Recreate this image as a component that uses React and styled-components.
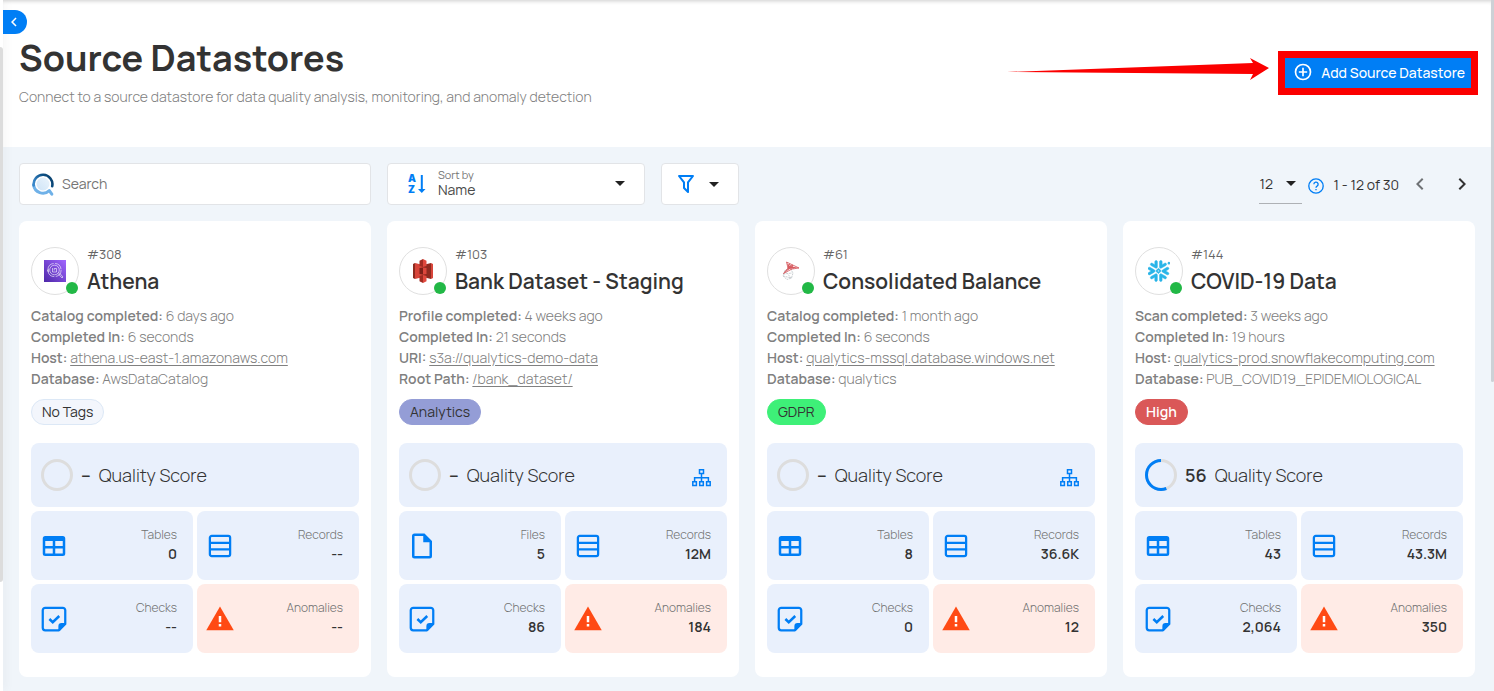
import React, { useState } from "react";
import styled, { createGlobalStyle } from "styled-components";
import { SiSnowflake } from "react-icons/si";

const BLUE = "#007ef5";

const GlobalStyle = createGlobalStyle`
    * {
        box-sizing: border-box;
    }

    body {
        margin: 0;
        background: #fff;
        color: #333;
        font-family: Manrope, Inter, "Noto Sans", sans-serif;
        font-size: 14px;
        overflow: hidden;
    }

    button, input, select {
        font: inherit;
        color: inherit;
    }

    svg {
        display: block;
        flex: none;
    }
`;

const Shell = styled.div`
    display: grid;
    grid-template-columns: 3px 1fr 3px;
    height: 100vh;
`;

const SideEdge = styled.div`
    z-index: 1;
    padding-top: 47px;
    background: #fff;
    box-shadow: 2px 0 8px rgba(0, 0, 0, 0.08);
`;

const Thumb = styled.div`
    height: ${(p) => p.$size};
    background: ${(p) => p.$color};
    border-radius: ${(p) => p.$radius};
`;

const ScrollTrack = styled.div`
    background: #f0f5fa;
`;

const Main = styled.main`
    position: relative;
    min-width: 0;
    overflow: hidden;
    background: #f0f5fa;
`;

const CollapseButton = styled.button`
    position: absolute;
    top: 10px;
    left: 0;
    z-index: 2;
    display: flex;
    align-items: center;
    width: 24px;
    height: 24px;
    padding: 0 2px;
    border: 0;
    border-radius: 0 12px 12px 0;
    background: ${BLUE};
    color: #fff;
    cursor: pointer;
`;

const Header = styled.header`
    display: flex;
    justify-content: space-between;
    min-height: 147px;
    padding: 34px 20px 0 16px;
    background: #fff;
    box-shadow: inset 0 4px 4px -3px rgba(0, 0, 0, 0.2);

    h1 {
        margin: 0;
        font-size: 36px;
        line-height: 48px;
        font-weight: 700;
    }

    p {
        margin: 5px 0 0;
        line-height: 20px;
        font-weight: 300;
        color: #808080;
    }
`;

const HeaderActions = styled.div`
    display: flex;
    align-items: flex-start;
    gap: 16px;
    padding-top: 24px;
`;

const AddButton = styled.button`
    display: flex;
    align-items: center;
    justify-content: space-between;
    width: 186px;
    height: 30px;
    padding: 0 6px 2px 8px;
    border: 0;
    outline: 7px solid #fb0000;
    background: ${BLUE};
    color: #fff;
    font-weight: 500;
    white-space: nowrap;
    cursor: pointer;
`;

const Content = styled.section`
    padding: 16px;
`;

const Columns = styled.div`
    display: grid;
    grid-template-columns: repeat(4, minmax(0, 1fr));
    gap: 16px;
    margin-bottom: 16px;
`;

const Box = styled.div`
    display: flex;
    align-items: center;
    height: 42px;
    border: 1px solid #e2e4e7;
    border-radius: 4px;
    background: #fff;
`;

const SearchBox = styled(Box)`
    gap: 8px;
    padding: 0 12px;

    input {
        flex: 1;
        min-width: 0;
        padding: 0 0 2px;
        border: 0;
        outline: 0;
        background: none;
    }

    input::placeholder {
        color: #757575;
        opacity: 1;
    }
`;

const Filters = styled.div`
    display: flex;
    gap: 16px;
`;

const SortBox = styled(Box)`
    flex: 1;
    gap: 11px;
    padding: 0 19px 0 20px;
`;

const SelectWrap = styled.div`
    display: grid;
    align-items: center;

    select {
        grid-area: 1 / 1;
        appearance: none;
        width: 100%;
        height: 16px;
        padding: 0;
        border: 0;
        outline: 0;
        background: none;
        line-height: 16px;
    }

    svg {
        grid-area: 1 / 1;
        justify-self: end;
        pointer-events: none;
    }
`;

const SortField = styled(SelectWrap)`
    flex: 1;
    grid-template-rows: 14px 16px;
    padding-bottom: 2px;

    label {
        grid-area: 1 / 1;
        font-size: 11px;
        line-height: 14px;
        color: #757575;
    }

    select {
        grid-area: 2 / 1;
        color: #4a4a4a;
    }

    svg {
        grid-area: 1 / 1 / 3 / 2;
    }
`;

const FilterButton = styled.button`
    display: flex;
    align-items: center;
    gap: 11px;
    width: 78px;
    height: 42px;
    padding: 0 12px;
    border: 1px solid #e2e4e7;
    border-radius: 4px;
    background: #fff;
    cursor: pointer;
`;

const Pager = styled.div`
    grid-column: span 2;
    display: flex;
    align-items: center;
    justify-content: flex-end;
    padding-right: 1px;
    white-space: nowrap;
`;

const PageSize = styled(SelectWrap)`
    width: 43px;
    height: 39px;
    padding-right: 6px;
    border-bottom: 1px solid #aeb1b5;
`;

const HelpIcon = styled.svg`
    margin: 4px 9px 0 6px;
`;

const PageButton = styled.button`
    width: 24px;
    height: 24px;
    margin-left: ${(p) => p.$gap};
    padding: 0;
    border: 0;
    background: none;
    cursor: pointer;

    &:disabled {
        color: #6f7275;
        cursor: default;
    }
`;

const Card = styled.article`
    padding: 26px 12px 24px;
    border-radius: 8px;
    background: #fff;
`;

const CardHead = styled.div`
    display: flex;
    gap: 8px;
    margin-bottom: 10px;

    small {
        display: block;
        font-size: 13px;
        line-height: 15px;
        color: #666;
    }

    h2 {
        margin: 6px 0 0;
        font-size: 21px;
        line-height: 27px;
        font-weight: 600;
        white-space: nowrap;
    }
`;

const Avatar = styled.div`
    position: relative;
    display: flex;
    align-items: center;
    justify-content: center;
    width: 48px;
    height: 48px;
    border: 1px solid #e0e0e0;
    border-radius: 50%;
`;

const StatusDot = styled.span`
    position: absolute;
    right: 0;
    bottom: 0;
    width: 12px;
    height: 12px;
    border-radius: 50%;
    background: #22b846;
`;

const Detail = styled.p`
    margin: 0;
    line-height: 21px;
    font-weight: 300;
    color: #808080;
    white-space: nowrap;

    strong {
        font-weight: 600;
    }

    a {
        color: inherit;
        text-underline-offset: 2px;
    }
`;

const Tag = styled.span`
    display: inline-block;
    height: 26px;
    margin: 10px 0 18px;
    padding: 0 10px;
    border: 1px solid ${(p) => p.$border || p.$bg};
    border-radius: 13px;
    background: ${(p) => p.$bg};
    color: ${(p) => p.$color || "#333"};
    line-height: 24px;
    font-weight: ${(p) => p.$weight || 400};
    vertical-align: top;
`;

const Stats = styled.div`
    display: grid;
    grid-template-columns: 1fr 1fr;
    gap: 4px;
`;

const Quality = styled.div`
    grid-column: span 2;
    display: flex;
    align-items: center;
    gap: 8px;
    height: 64px;
    padding: 0 16px 0 10px;
    border-radius: 8px;
    background: #e9f0fc;
    font-size: 18px;
    font-weight: 300;

    strong {
        font-weight: 600;
    }
`;

const LineageButton = styled.button`
    margin: 5px 0 0 auto;
    padding: 0;
    border: 0;
    background: none;
    cursor: pointer;
`;

const Tile = styled.div`
    display: flex;
    align-items: center;
    justify-content: space-between;
    height: 69px;
    padding: 0 16px 0 8px;
    border-radius: 8px;
    background: ${(p) => (p.$alert ? "#ffebe6" : "#e9f0fc")};
    line-height: 19px;
    text-align: right;
`;

const TileText = styled.div`
    padding-bottom: 3px;
    font-variant-ligatures: none;

    span {
        display: block;
        font-size: 12px;
        font-weight: 300;
        color: #707070;
    }

    strong {
        display: block;
        font-weight: 600;
    }
`;

const TileIcon = ({ name }) => {
    const color = name === "Anomalies" ? "#ff4a14" : BLUE;
    return (
        <svg width="30" height="30" viewBox="0 0 24 24" fill={color} aria-hidden="true">
            {name === "Tables" && (
                <path d="M5,4H19A2,2 0 0,1 21,6V18A2,2 0 0,1 19,20H5A2,2 0 0,1 3,18V6A2,2 0 0,1 5,4M5,8V12H11V8H5M13,8V12H19V8H13M5,14V18H11V14H5M13,14V18H19V14H13Z" />
            )}
            {name === "Files" && (
                <path d="M14,2H6A2,2 0 0,0 4,4V20A2,2 0 0,0 6,22H18A2,2 0 0,0 20,20V8L14,2M18,20H6V4H13V9H18V20Z" />
            )}
            {name === "Records" && (
                <g fill="none" stroke={color} strokeWidth="1.8">
                    <rect x="3.9" y="3.9" width="16.2" height="16.2" rx="1.5" />
                    <path d="M4 9.4H20M4 14.7H20" />
                </g>
            )}
            {name === "Checks" && (
                <>
                    <path d="M21 16V5a2 2 0 0 0-2-2H5a2 2 0 0 0-2 2v14a2 2 0 0 0 2 2h11z" fill="none" stroke={color} strokeWidth="1.8" strokeLinejoin="round" />
                    <path d="M21.500 15.200H18a2.500 2.500 0 0 0-2.500 2.500V21.500h1z" />
                    <path d="M8.300 12L11 14.600L16.200 9.600" fill="none" stroke={color} strokeWidth="2" />
                </>
            )}
            {name === "Anomalies" && (
                <>
                    <path d="M1,21H23L12,2Z" />
                    <path d="M13,14.500H11V9.500H13M13,18H11V16H13" fill="#fff" />
                </>
            )}
        </svg>
    );
};

const Caret = () => (
    <svg width="10" height="5" viewBox="0 0 10 5" aria-hidden="true">
        <path d="M0 0H10L5 5Z" fill="#222" />
    </svg>
);

const Chevron = ({ left, size = 24 }) => (
    <svg width={size} height={size} viewBox="0 0 24 24" fill="currentColor" aria-hidden="true">
        <path
            d={
                left
                    ? "M15.410,16.580L10.830,12L15.410,7.410L14,6L8,12L14,18L15.410,16.580Z"
                    : "M8.590,16.580L13.170,12L8.590,7.410L10,6L16,12L10,18L8.590,16.580Z"
            }
        />
    </svg>
);

const BrandMark = () => (
    <svg width="22" height="23" viewBox="0 0 22 23" fill="none" aria-hidden="true">
        <defs>
            <linearGradient id="mark-top" x1="0" y1="0.600" x2="1" y2="0.200">
                <stop offset="0" stopColor="#3987c9" />
                <stop offset="0.600" stopColor="#0c5085" />
                <stop offset="1" stopColor="#0a3f6b" />
            </linearGradient>
            <linearGradient id="mark-fill" x1="1" y1="0" x2="0" y2="1">
                <stop offset="0" stopColor="#eaf4fc" />
                <stop offset="1" stopColor="#cfe4f7" />
            </linearGradient>
        </defs>
        <circle cx="11" cy="11" r="6.500" fill="url(#mark-fill)" />
        <path d="M1.600 12A9.400 9.400 0 0 0 17.300 17.600L19.800 21.200" stroke="#6fb1e8" strokeWidth="3" strokeLinecap="round" strokeLinejoin="round" />
        <path d="M1.700 12.500A9.400 9.400 0 1 1 20.200 13.200" stroke="url(#mark-top)" strokeWidth="2.600" strokeLinecap="round" />
    </svg>
);

const SortIcon = () => (
    <svg width="19" height="26" viewBox="0 0 19 26" fill={BLUE} aria-hidden="true">
        <g fontFamily="Inter, sans-serif" fontSize="10" fontWeight="900">
            <text x="0" y="11">A</text>
            <text x="0" y="22">Z</text>
        </g>
        <path d="M12.800 4H14.800V18H17.500L13.800 22L10 18H12.800Z" />
    </svg>
);

const Ring = ({ value }) => (
    <svg width="32" height="32" viewBox="0 0 32 32" fill="none" strokeWidth="3" aria-hidden="true">
        <circle cx="16" cy="16" r="14.500" stroke="#ddd" />
        {value > 0 && (
            <circle
                cx="16"
                cy="16"
                r="14.500"
                stroke={BLUE}
                pathLength="100"
                strokeDasharray={`${value} 100`}
                transform="matrix(0 -1 -1 0 32 32)"
            />
        )}
    </svg>
);

const LineageIcon = () => (
    <svg width="19" height="18" viewBox="0 0 19 18" fill="none" stroke={BLUE} strokeWidth="1.500" aria-hidden="true">
        <path d="M7.500 0.800h4v3.700h-4zM0.800 12.800h3.600v3.700H0.800zM7.700 12.800h3.600v3.700H7.700zM14.600 12.800h3.600v3.700h-3.600zM9.500 4.500v8M2.600 12.500V8.700h13.800v3.800" />
    </svg>
);

const AthenaLogo = () => (
    <svg width="22" height="22" viewBox="0 0 22 22" aria-hidden="true">
        <defs>
            <linearGradient id="athena" x1="0" y1="1" x2="1" y2="0">
                <stop offset="0" stopColor="#4d27a8" />
                <stop offset="1" stopColor="#a166ff" />
            </linearGradient>
        </defs>
        <rect width="22" height="22" fill="url(#athena)" />
        <g fill="none" stroke="#fff" strokeOpacity="0.850" strokeWidth="0.700">
            <circle cx="10.500" cy="10" r="4.800" />
            <circle cx="10.500" cy="10" r="6.600" strokeDasharray="9 1.500" />
            <path d="M8.500 8v4h4V8.500h-2.300v2M3 10.500l1.500-1v2zM14 13.500l4 4.500 1-1-4-4.500" />
        </g>
    </svg>
);

const S3Logo = () => (
    <svg width="20" height="24" viewBox="0 0 20 24" aria-hidden="true">
        <path d="M0 5L2 4V20L0 19Z" fill="#8c2b20" />
        <path d="M2 4L10 6V18L2 20Z" fill="#d8453a" />
        <path d="M10 6L18 4V20L10 18Z" fill="#8f2b20" />
        <path d="M18 4L20 5V19L18 20Z" fill="#d8453a" />
        <path d="M6.500 1.800L10 0V8L6.500 7ZM6.500 17L10 16V24L6.500 22.200Z" fill="#a02c22" />
        <path d="M10 0L13.500 1.800V7L10 8ZM10 16L13.500 17V22.200L10 24Z" fill="#e0483d" />
        <path d="M6.500 9L10 8.500V15.500L6.500 15Z" fill="#7d2018" />
        <path d="M10 8.500L13.500 9V15L10 15.500Z" fill="#dd473c" />
    </svg>
);

const SqlServerLogo = () => (
    <svg width="18" height="20" viewBox="0 0 18 20" fill="none" aria-hidden="true">
        <path d="M8 7L3 9.500L1 15L5 18.500L9.500 17L11 12ZM1.500 13L10 12M3 9.500L9 17M1 15L9.500 17" stroke="#cbd0d3" strokeWidth="1" strokeDasharray="2 0.700" />
        <path d="M4.500 1L17 7L10 8L1.500 12.500L6 7ZM6 7L10.500 4L10 8L6 7L7 3L12 7.500" stroke="#cd3940" strokeWidth="0.700" />
        <path d="M5 2L8 5L17 7L9 7L2 12L6.500 7Z" fill="#d85b60" />
    </svg>
);

const logos = {
    athena: <AthenaLogo />,
    s3: <S3Logo />,
    mssql: <SqlServerLogo />,
    snowflake: <SiSnowflake size={22} color="#29b5e8" stroke="#29b5e8" strokeWidth={0.5} aria-hidden="true" />,
};

const datastores = [
    {
        id: 308,
        name: "Athena",
        logo: "athena",
        details: [
            ["Catalog completed", "6 days ago"],
            ["Completed In", "6 seconds"],
            ["Host", "athena.us-east-1.amazonaws.com", true],
            ["Database", "AwsDataCatalog"],
        ],
        tag: { label: "No Tags", bg: "#f3f6fc", border: "#dce8f6" },
        stats: [["Tables", "0"], ["Records", "--"], ["Checks", "--"], ["Anomalies", "--"]],
    },
    {
        id: 103,
        name: "Bank Dataset - Staging",
        logo: "s3",
        details: [
            ["Profile completed", "4 weeks ago"],
            ["Completed In", "21 seconds"],
            ["URI", "s3a://qualytics-demo-data", true],
            ["Root Path", "/bank_dataset/", true],
        ],
        tag: { label: "Analytics", bg: "#949dd6" },
        lineage: true,
        stats: [["Files", "5"], ["Records", "12M"], ["Checks", "86"], ["Anomalies", "184"]],
    },
    {
        id: 61,
        name: "Consolidated Balance",
        logo: "mssql",
        details: [
            ["Catalog completed", "1 month ago"],
            ["Completed In", "6 seconds"],
            ["Host", "qualytics-mssql.database.windows.net", true],
            ["Database", "qualytics"],
        ],
        tag: { label: "GDPR", bg: "#3ef078" },
        lineage: true,
        stats: [["Tables", "8"], ["Records", "36.6K"], ["Checks", "0"], ["Anomalies", "12"]],
    },
    {
        id: 144,
        name: "COVID-19 Data",
        logo: "snowflake",
        details: [
            ["Scan completed", "3 weeks ago"],
            ["Completed In", "19 hours"],
            ["Host", "qualytics-prod.snowflakecomputing.com", true],
            ["Database", "PUB_COVID19_EPIDEMIOLOGICAL"],
        ],
        tag: { label: "High", bg: "#da5858", color: "#fff", weight: 600 },
        score: 56,
        stats: [["Tables", "43"], ["Records", "43.3M"], ["Checks", "2,064"], ["Anomalies", "350"]],
    },
];

const DatastoreCard = ({ store }) => (
    <Card>
        <CardHead>
            <Avatar>
                {logos[store.logo]}
                <StatusDot />
            </Avatar>
            <div>
                <small>#{store.id}</small>
                <h2>{store.name}</h2>
            </div>
        </CardHead>

        {store.details.map(([label, value, isLink]) => (
            <Detail key={label}>
                <strong>{label}:</strong> {isLink ? <a href="#host">{value}</a> : value}
            </Detail>
        ))}

        <Tag $bg={store.tag.bg} $border={store.tag.border} $color={store.tag.color} $weight={store.tag.weight}>
            {store.tag.label}
        </Tag>

        <Stats>
            <Quality>
                <Ring value={store.score || 0} />
                <strong>{store.score || "–"}</strong>
                Quality Score
                {store.lineage && (
                    <LineageButton type="button" aria-label="View lineage">
                        <LineageIcon />
                    </LineageButton>
                )}
            </Quality>
            {store.stats.map(([label, value]) => (
                <Tile key={label} $alert={label === "Anomalies"}>
                    <TileIcon name={label} />
                    <TileText>
                        <span>{label}</span>
                        <strong>{value}</strong>
                    </TileText>
                </Tile>
            ))}
        </Stats>
    </Card>
);

const App = () => {
    const [search, setSearch] = useState("");
    const [sort, setSort] = useState("Name");
    const [pageSize, setPageSize] = useState("12");

    const visible = datastores.filter((d) => d.name.toLowerCase().includes(search.toLowerCase()));

    return (
        <Shell>
            <GlobalStyle />
            <SideEdge>
                <Thumb $size="83%" $color="#dcdcdc" $radius="0 3px 3px 0" />
            </SideEdge>

            <Main>
                <CollapseButton type="button" aria-label="Collapse sidebar">
                    <Chevron left size={18} />
                </CollapseButton>

                <Header>
                    <div>
                        <h1>Source Datastores</h1>
                        <p>Connect to a source datastore for data quality analysis, monitoring, and anomaly detection</p>
                    </div>
                    <HeaderActions>
                        <svg width="262" height="22" viewBox="0 0 262 22" aria-hidden="true">
                            <path d="M0 14L246 5L243 0L262 10L243 22L246 16Z" fill="#fb0000" />
                        </svg>
                        <AddButton type="button">
                            <svg width="20" height="20" viewBox="0 0 24 24" fill="none" stroke="#fff" strokeWidth="2" aria-hidden="true">
                                <circle cx="12" cy="12" r="9" />
                                <path d="M12 7V17M7 12H17" />
                            </svg>
                            Add Source Datastore
                        </AddButton>
                    </HeaderActions>
                </Header>

                <Content>
                    <Columns>
                        <SearchBox>
                            <BrandMark />
                            <input
                                type="text"
                                aria-label="Search"
                                placeholder="Search"
                                value={search}
                                onChange={(e) => setSearch(e.target.value)}
                            />
                        </SearchBox>

                        <Filters>
                            <SortBox>
                                <SortIcon />
                                <SortField>
                                    <label htmlFor="sort">Sort by</label>
                                    <select id="sort" value={sort} onChange={(e) => setSort(e.target.value)}>
                                        <option>Name</option>
                                    </select>
                                    <Caret />
                                </SortField>
                            </SortBox>
                            <FilterButton type="button" aria-label="Filter">
                                <svg width="24" height="24" viewBox="0 0 24 24" fill={BLUE} aria-hidden="true">
                                    <path d="M15,19.880C15.040,20.180 14.940,20.500 14.710,20.710C14.320,21.100 13.690,21.100 13.300,20.710L9.290,16.700C9.060,16.470 8.960,16.160 9,15.870V10.750L4.210,4.620C3.870,4.190 3.950,3.560 4.380,3.220C4.570,3.080 4.780,3 5,3H19C19.220,3 19.430,3.080 19.620,3.220C20.050,3.560 20.130,4.190 19.790,4.620L15,10.750V19.880M7.040,5L11,10.060V15.580L13,17.580V10.050L16.960,5H7.040Z" />
                                </svg>
                                <Caret />
                            </FilterButton>
                        </Filters>

                        <Pager>
                            <PageSize>
                                <select aria-label="Items per page" value={pageSize} onChange={(e) => setPageSize(e.target.value)}>
                                    <option>12</option>
                                    <option>24</option>
                                </select>
                                <Caret />
                            </PageSize>
                            <HelpIcon width="16" height="16" viewBox="0 0 24 24" fill="none" stroke={BLUE} strokeWidth="2" aria-hidden="true">
                                <circle cx="12" cy="12" r="10.800" />
                                <path d="M8.800 9.500a3.200 3.200 0 1 1 4.800 2.700c-1 .6-1.600 1.100-1.600 2.300M12 16.500v2" />
                            </HelpIcon>
                            1 - 12 of 30
                            <PageButton type="button" aria-label="Previous page" disabled $gap="9px">
                                <Chevron left />
                            </PageButton>
                            <PageButton type="button" aria-label="Next page" $gap="18px">
                                <Chevron />
                            </PageButton>
                        </Pager>
                    </Columns>

                    <Columns>
                        {visible.map((store) => (
                            <DatastoreCard key={store.id} store={store} />
                        ))}
                    </Columns>
                </Content>
            </Main>

            <ScrollTrack>
                <Thumb $size="382px" $color="#cdd1d6" $radius="0 0 3px 3px" />
            </ScrollTrack>
        </Shell>
    );
};

export default App;
